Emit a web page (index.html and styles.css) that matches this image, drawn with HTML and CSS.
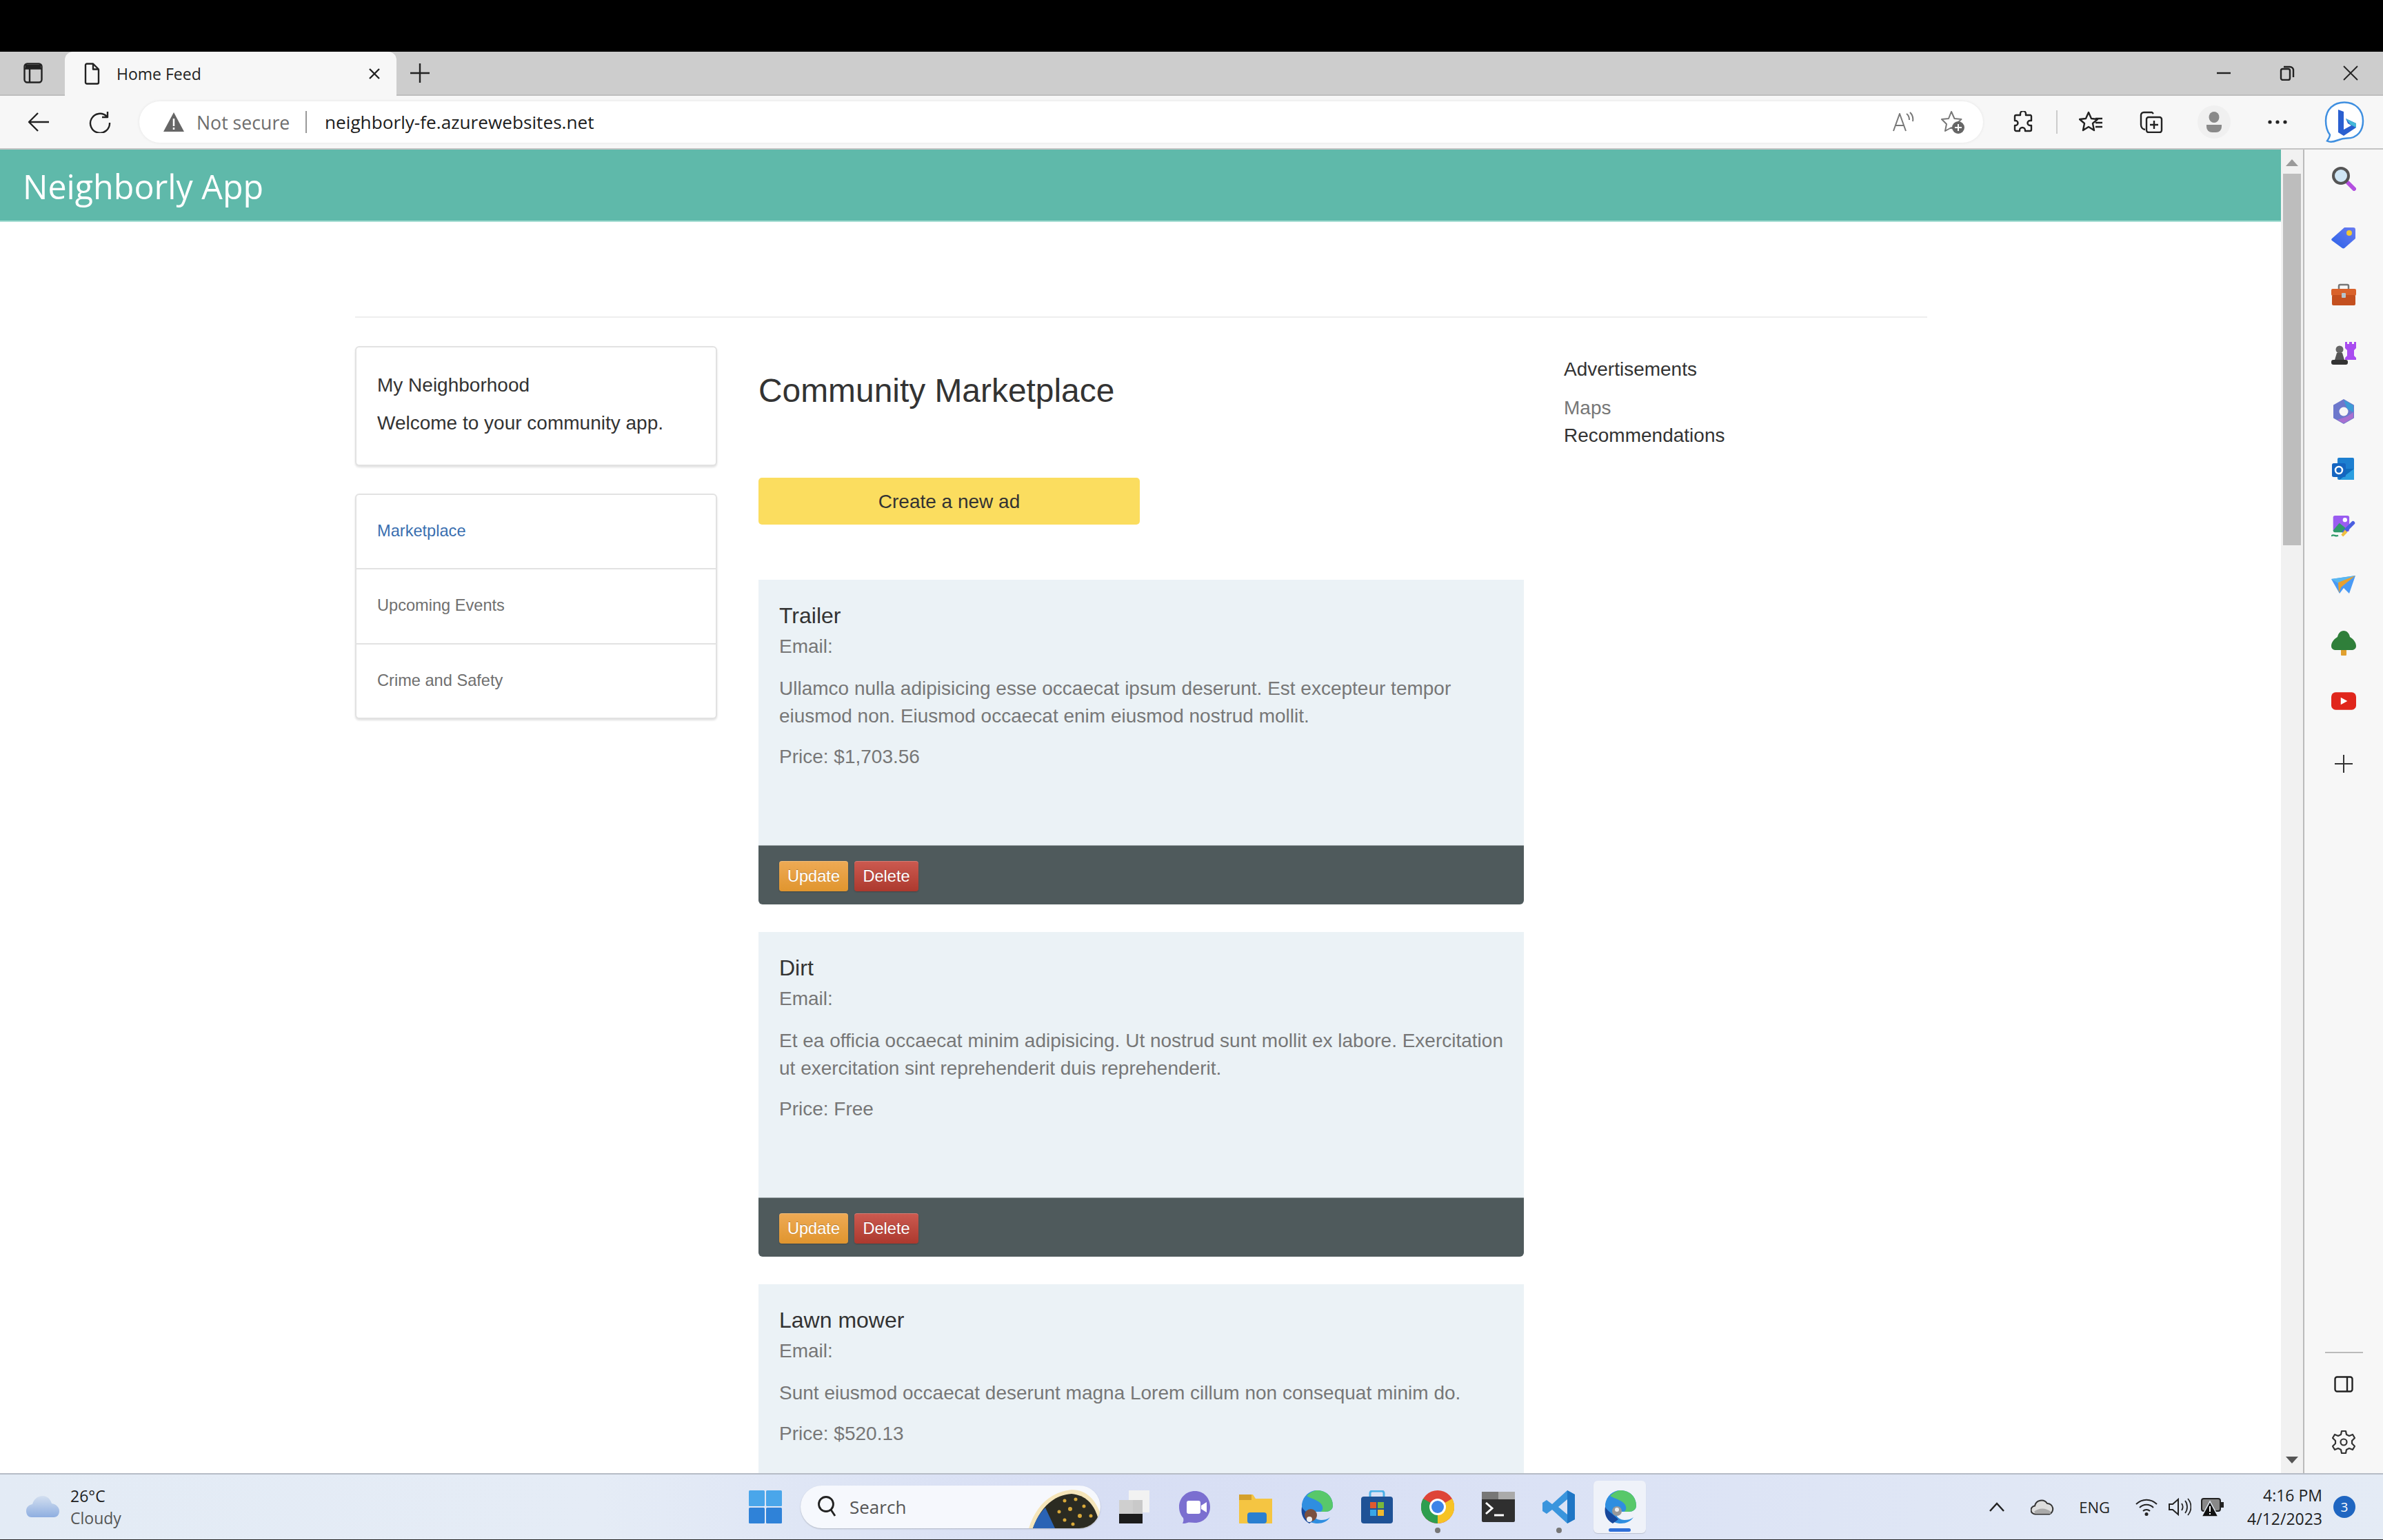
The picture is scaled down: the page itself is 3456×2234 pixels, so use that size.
FILE: index.html
```html
<!DOCTYPE html>
<html lang="en">
<head>
<meta charset="utf-8">
<title>Home Feed</title>
<link rel="stylesheet" href="styles.css">
</head>
<body>
<div class="topblack"></div>
<div class="tabbar">
  <svg class="ic tabs-ic" viewBox="0 0 28 30"><rect x="1.5" y="1.5" width="25" height="27" rx="4" class="ln"/><path d="M1.5 8.5h25M9 8.5v20" class="ln"/><path d="M3 3h22v5H3z" fill="#222"/></svg>
  <div class="tab">
    <svg class="ic file-ic" viewBox="0 0 24 32"><path d="M3 3.5a2 2 0 0 1 2-2h9l8 8v19a2 2 0 0 1-2 2H5a2 2 0 0 1-2-2zM14 1.5v8h8" class="ln"/></svg>
    <span class="tab-title">Home Feed</span>
    <svg class="ic tab-x" viewBox="0 0 18 18"><path d="M2 2l14 14M16 2L2 16" class="ln"/></svg>
  </div>
  <svg class="ic plus-ic" viewBox="0 0 30 30"><path d="M15 1v28M1 15h28" class="ln"/></svg>
  <div class="winctl">
    <svg class="ic" width="22" height="22" viewBox="0 0 22 22"><path d="M1 11h20" class="ln"/></svg>
    <svg class="ic" width="22" height="22" viewBox="0 0 22 22"><rect x="2" y="5" width="13" height="16" rx="2.5" class="ln"/><path d="M6 2h9a5 5 0 0 1 5 5v10" class="ln"/></svg>
    <svg class="ic" width="22" height="22" viewBox="0 0 22 22"><path d="M1 1l20 20M21 1L1 21" class="thin"/></svg>
  </div>
</div>
<div class="toolbar">
  <svg class="ic back-ic" viewBox="0 0 32 30"><path d="M31 15H3M15 2L2 15l13 13" class="ln"/></svg>
  <svg class="ic reload-ic" viewBox="0 0 34 32"><path d="M27 8A14 14 0 1 0 31 17M28 1v8h-8" class="ln"/></svg>
  <div class="address">
    <svg class="ic warn-ic" viewBox="0 0 32 30"><path d="M16 1L31 29H1z" fill="#666"/><path d="M16 10v11M16 23v3" stroke="#fff" stroke-width="2.5"/></svg>
    <span class="notsecure">Not secure</span>
    <span class="addr-sep"></span>
    <span class="url">neighborly-fe.azurewebsites.net</span>
    <span class="spacer"></span>
    <svg class="ic read-ic" viewBox="0 0 32 30"><path d="M2 28L11 3l9 25M5.5 20h11" class="gr"/><path d="M21 3c3 2 4 6 4 9M26 1c3 3 5 8 4 13" class="gr"/></svg>
    <svg class="ic fav-ic" viewBox="0 0 36 34"><path d="M16 2l4.500 10 10 1-7.500 7 2 10-9-5-9 5 2-10-7-7 10-1z" class="gr"/><circle cx="26" cy="25" r="9" fill="#666"/><path d="M26 20v10M21 25h10" stroke="#fff" stroke-width="2"/></svg>
  </div>
  <svg class="ic puzzle-ic" viewBox="0 0 30 32"><path d="M11 4a4 4 0 0 1 8 0v2h7a2 2 0 0 1 1 2v6h-2a3.500 3.500 0 0 0 0 7h2v6a2 2 0 0 1-2 2h-7v-1a4 4 0 0 0-8 0v1H5a2 2 0 0 1-2-2v-6h1a3.500 3.500 0 0 0 0-7H3V8a2 2 0 0 1 2-2h6z" class="ln"/></svg>
  <span class="tool-sep"></span>
  <svg class="ic favlist-ic" viewBox="0 0 36 32"><path d="M14 2l4 9 9 1-7 6 2 10-8-5-8 5 2-10-7-6 9-1z" class="ln"/><path d="M24 11h10M24 17h10M24 23h10" class="ln"/></svg>
  <svg class="ic coll-ic" viewBox="0 0 34 32"><path d="M20 4l-2-2H6a4 4 0 0 0-4 4v14a7 7 0 0 0 6 7" class="ln"/><rect x="10" y="9" width="22" height="22" rx="3" class="ln"/><path d="M21 14v12M15 20h12" class="ln"/></svg>
  <div class="profile"><svg class="ic" width="24" height="30" viewBox="0 0 24 30"><ellipse cx="12" cy="8" rx="7.500" ry="8" fill="#8a8a8a"/><path d="M1 19h22v3a8 8 0 0 1-8 8H9a8 8 0 0 1-8-8z" fill="#8a8a8a"/></svg></div>
  <svg class="ic dots-ic" viewBox="0 0 28 6"><circle cx="3" cy="3" r="2.600" fill="#222"/><circle cx="14" cy="3" r="2.600" fill="#222"/><circle cx="25" cy="3" r="2.600" fill="#222"/></svg>
  <svg class="ic bing-ic" viewBox="0 0 60 60"><path d="M30 1.500c15 0 27 10 27 27 0 14-8 25-23 25-5 0-9 1-14 3-5 2-11 3-15 1 2-3 4-6 4-9C4 42 3 36 3 28 3 11 15 1.500 30 1.500z" fill="#fff" stroke="#3f8fe0" stroke-width="2.500"/><path d="M21 12l8 3v26l11-6-5-3-3-7 15 7v6L29 50l-8-5z" fill="#2a5fd0"/><path d="M32 25l15 7v6l-8-4z" fill="#45b8d8"/></svg>
</div>
<div class="viewport">
  <main class="page">
    <header class="appbar">Neighborly App</header>
    <div class="container">
      <hr class="rule">
      <div class="columns">
        <aside class="left">
          <div class="panel intro">
            <p class="intro-line">My Neighborhood</p>
            <p class="intro-line">Welcome to your community app.</p>
          </div>
          <nav class="panel menu">
            <a class="menu-item active">Marketplace</a>
            <a class="menu-item">Upcoming Events</a>
            <a class="menu-item">Crime and Safety</a>
          </nav>
        </aside>
        <section class="center">
          <h1 class="title">Community Marketplace</h1>
          <button class="create">Create a new ad</button>
          <article class="card">
            <div class="card-body">
              <h2 class="card-title">Trailer</h2>
              <div class="line">Email:</div>
              <p class="desc">Ullamco nulla adipisicing esse occaecat ipsum deserunt. Est excepteur tempor eiusmod non. Eiusmod occaecat enim eiusmod nostrud mollit.</p>
              <p class="line">Price: $1,703.56</p>
            </div>
            <div class="card-foot"><button class="btn update">Update</button><button class="btn delete">Delete</button></div>
          </article>
          <article class="card">
            <div class="card-body">
              <h2 class="card-title">Dirt</h2>
              <div class="line">Email:</div>
              <p class="desc">Et ea officia occaecat minim adipisicing. Ut nostrud sunt mollit ex labore. Exercitation ut exercitation sint reprehenderit duis reprehenderit.</p>
              <p class="line">Price: Free</p>
            </div>
            <div class="card-foot"><button class="btn update">Update</button><button class="btn delete">Delete</button></div>
          </article>
          <article class="card">
            <div class="card-body">
              <h2 class="card-title">Lawn mower</h2>
              <div class="line">Email:</div>
              <p class="desc">Sunt eiusmod occaecat deserunt magna Lorem cillum non consequat minim do.</p>
              <p class="line">Price: $520.13</p>
            </div>
          </article>
        </section>
        <aside class="ads">
          <div class="ads-head">Advertisements</div>
          <div class="ads-muted">Maps</div>
          <div class="ads-link">Recommendations</div>
        </aside>
      </div>
    </div>
  </main>
  <div class="scrollbar">
    <svg class="arrow" viewBox="0 0 18 10"><path d="M9 0l9 10H0z" fill="#9a9a9a"/></svg>
    <div class="thumb"></div>
    <span class="spacer"></span>
    <svg class="arrow" viewBox="0 0 18 10"><path d="M0 0h18L9 10z" fill="#555"/></svg>
  </div>
  <aside class="edge">
    <div class="edge-cell first-cell"><svg class="ei" viewBox="0 0 36 36"><path d="M22 22l11 11" stroke="#b44fe0" stroke-width="6" stroke-linecap="round"/><circle cx="14" cy="14" r="11" fill="#cfe6f5" stroke="#555" stroke-width="4"/></svg></div>
    <div class="edge-cell"><svg class="ei" viewBox="0 0 36 36"><defs><linearGradient id="tg" x1="0" y1="1" x2="1" y2="0"><stop offset="0" stop-color="#2a62e8"/><stop offset="1" stop-color="#6a7cf0"/></linearGradient></defs><path d="M1 19L19 3h13a3 3 0 0 1 3 3v13L19 33a3 3 0 0 1-3 0L1 22a2 2 0 0 1 0-3z" fill="url(#tg)"/><circle cx="26" cy="11" r="4" fill="#f2c832"/></svg></div>
    <div class="edge-cell"><svg class="ei" viewBox="0 0 36 36"><path d="M11 8V4a2 2 0 0 1 2-2h10a2 2 0 0 1 2 2v4" fill="none" stroke="#777" stroke-width="2.500"/><rect x="0" y="8" width="36" height="10" rx="2" fill="#d9622b"/><rect x="1" y="17" width="34" height="15" rx="2" fill="#c4501f"/><rect x="15" y="14" width="6" height="7" rx="1" fill="#b5c4cc"/></svg></div>
    <div class="edge-cell"><svg class="ei" viewBox="0 0 36 36"><path d="M20 1h3v3h3V1h4v3h3V1h3v9l-3 3v8l3 3v3H20v-3l3-3v-8l-3-3z" fill="#a94cf0"/><circle cx="12" cy="12" r="5.500" fill="#666"/><path d="M8 17h8l3 10H5z" fill="#555"/><rect x="0" y="27" width="24" height="7" rx="3" fill="#333"/></svg></div>
    <div class="edge-cell"><svg class="ei" viewBox="0 0 36 36"><path d="M18 1l14 8v18l-14 8-14-8V9z" fill="#6d78cc" stroke="#6d78cc" stroke-width="2" stroke-linejoin="round"/><path d="M18 1l14 8v10l-9-5z" fill="#3d9bd6"/><path d="M32 19v8l-14 8-9-5 14-5z" fill="#a870d0"/><circle cx="18" cy="18" r="6.500" fill="#f7f7f7"/></svg></div>
    <div class="edge-cell"><svg class="ei" viewBox="0 0 36 36"><rect x="9" y="1" width="24" height="32" rx="2" fill="#1d7fd0"/><path d="M12 17l21 0v16H12z" fill="#0f6cbd"/><path d="M33 17v16H12z" fill="#2b9ee0"/><rect x="1" y="9" width="20" height="20" rx="2.500" fill="#1565c0"/><circle cx="11" cy="19" r="5" fill="none" stroke="#fff" stroke-width="2.500"/></svg></div>
    <div class="edge-cell"><svg class="ei" viewBox="0 0 40 38"><rect x="3" y="0" width="26" height="26" rx="3" fill="#9a5cf0"/><path d="M3 24l10-12 10 8-4 7H6a3 3 0 0 1-3-3z" fill="#2f9a6a"/><circle cx="22" cy="7" r="3.500" fill="#fff"/><path d="M21 26l14-14" stroke="#4a5ee0" stroke-width="6" stroke-linecap="round"/><path d="M16 31l6-8 4 4-7 7z" fill="#f0c040"/><path d="M0 33c4-4 7 2 11-1" fill="none" stroke="#2f9a6a" stroke-width="2.500"/></svg></div>
    <div class="edge-cell"><svg class="ei" viewBox="0 0 36 28"><path d="M0 5L35 0l-9 26-8-8-6 8z" fill="#4a9af5"/><path d="M0 5l10 6 25-11z" fill="#5ab8f0"/><path d="M10 10l25-10-21 17-3 8z" fill="#e8a030"/></svg></div>
    <div class="edge-cell"><svg class="ei" viewBox="0 0 36 36"><rect x="14" y="26" width="8" height="10" rx="1" fill="#e0a030"/><path d="M18 0c5 0 8 4 9 9 5 3 9 8 9 13 0 4-3 6-7 6H7c-4 0-7-2-7-6 0-5 4-10 9-13 1-5 4-9 9-9z" fill="#2f7f3a"/></svg></div>
    <div class="edge-cell"><svg class="ei yt" viewBox="0 0 34 24"><rect width="34" height="24" rx="6" fill="#e0261c"/><path d="M13 7l9 5-9 5z" fill="#fff"/></svg></div>
    <div class="edge-cell plus-cell"><svg class="edge-plus" viewBox="0 0 26 26"><path d="M13 0v26M0 13h26" stroke="#333" stroke-width="2" fill="none"/></svg></div>
    <span class="spacer"></span>
    <div class="edge-line"></div>
    <svg class="ic panel-ic" viewBox="0 0 28 24"><rect x="1.500" y="1.500" width="25" height="21" rx="3" class="ln"/><path d="M19 1.500v21" class="ln"/></svg>
    <svg class="ic gear-ic" viewBox="0 0 34 36"><path d="M14 2h6l1 5 4 2 5-2 3 5-4 4v4l4 4-3 5-5-2-4 2-1 5h-6l-1-5-4-2-5 2-3-5 4-4v-4L1 12l3-5 5 2 4-2z" fill="none" stroke="#333" stroke-width="2.200" stroke-linejoin="round"/><circle cx="17" cy="18" r="4.500" fill="none" stroke="#333" stroke-width="2.200"/></svg>
  </aside>
</div>
<footer class="taskbar">
  <div class="weather">
    <svg class="cloud-ic" viewBox="0 0 48 32"><defs><linearGradient id="cg" x1="0" y1="0" x2="0" y2="1"><stop offset="0" stop-color="#d3dff0"/><stop offset="1" stop-color="#8eaee0"/></linearGradient></defs><path d="M8 31C2 31 0 26 0 22c0-6 4-9 9-10C11 5 16 0 24 0c7 0 11 5 13 11 6 1 11 5 11 11 0 5-3 9-8 9z" fill="url(#cg)"/></svg>
    <div class="weather-text"><div class="temp">26°C</div><div class="cond">Cloudy</div></div>
  </div>
  <div class="taskapps">
    <svg class="ti win" viewBox="0 0 48 48"><rect x="0" y="0" width="23" height="23" rx="1.500" fill="#4aa6ea"/><rect x="25" y="0" width="23" height="23" rx="1.500" fill="#4aa6ea"/><rect x="0" y="25" width="23" height="23" rx="1.500" fill="#2f82d8"/><rect x="25" y="25" width="23" height="23" rx="1.500" fill="#2f82d8"/></svg>
    <div class="search">
      <svg class="search-ic" viewBox="0 0 30 34"><circle cx="13" cy="13" r="10.500" fill="none" stroke="#222" stroke-width="2.800"/><path d="M20 21l6 9" stroke="#222" stroke-width="2.800"/></svg>
      <span class="search-text">Search</span>
      <span class="spacer"></span>
      <svg class="search-art" viewBox="0 0 104 56"><path d="M0 56C10 24 30 4 62 0c22 0 36 16 42 36-2 10-6 16-12 20z" fill="#f5e5ba"/><path d="M6 56C16 28 34 8 62 6c20 2 32 14 38 34-2 8-4 12-8 16z" fill="#2b2b22"/><path d="M6 56c4-12 10-22 18-30l14 30z" fill="#2a63b5"/><g fill="#d8a838"><circle cx="52" cy="16" r="2.500"/><circle cx="68" cy="14" r="2.500"/><circle cx="80" cy="24" r="2.500"/><circle cx="60" cy="28" r="3"/><circle cx="44" cy="32" r="2.500"/><circle cx="74" cy="38" r="3"/><circle cx="52" cy="44" r="2.500"/><circle cx="90" cy="38" r="2.500"/><circle cx="64" cy="50" r="2.500"/></g></svg>
    </div>
    <svg class="ti" viewBox="0 0 48 48"><rect x="16" y="0" width="30" height="32" fill="#f2f2f2"/><rect x="2" y="14" width="34" height="30" fill="#c9c9c9"/><rect x="2" y="14" width="20" height="34" fill="#1c1c1c"/><rect x="2" y="14" width="20" height="20" fill="#cfcfcf"/><rect x="2" y="34" width="34" height="14" fill="#1c1c1c"/></svg>
    <svg class="ti" viewBox="0 0 48 48"><path d="M24 1c13 0 22 10 22 23S37 47 24 47c-4 0-8-1-11 0-2 1-6 1-7 1 1-2 2-5 1-8C3 36 1 30 1 24 1 11 11 1 24 1z" fill="#7b6fd0"/><rect x="12" y="15" width="20" height="19" rx="3" fill="#fff"/><path d="M33 22l8-5v15l-8-5z" fill="#fff"/></svg>
    <svg class="ti" viewBox="0 0 48 48"><path d="M0 6h20l4 6h24v36H0z" fill="#f5c542"/><path d="M0 6h18v8H0z" fill="#d4a02c"/><rect x="12" y="32" width="28" height="16" rx="4" fill="#2a7fd0"/></svg>
    <svg class="ti" viewBox="0 0 48 48"><use href="#edge-shape"/><circle cx="16" cy="36" r="9" fill="#7a5040"/><circle cx="14" cy="42" r="4" fill="#eee"/></svg>
    <svg class="ti" viewBox="0 0 48 48"><path d="M14 10V4a3 3 0 0 1 3-3h14a3 3 0 0 1 3 3v6" fill="none" stroke="#4ab0e8" stroke-width="3"/><rect x="1" y="9" width="46" height="39" rx="4" fill="#1f5296"/><rect x="14" y="17" width="9" height="9" fill="#e05a30"/><rect x="25" y="17" width="9" height="9" fill="#7ab83a"/><rect x="14" y="28" width="9" height="9" fill="#38a6e6"/><rect x="25" y="28" width="9" height="9" fill="#f0b92e"/></svg>
    <div class="dotwrap">
      <svg class="ti" viewBox="0 0 48 48"><circle cx="24" cy="24" r="24" fill="#de4437"/><path d="M24 24L45 12A24 24 0 0 1 24 48z" fill="#f7c325"/><path d="M24 24L24 48A24 24 0 0 1 3 12z" fill="#2e9e4f"/><circle cx="24" cy="24" r="12" fill="#fff"/><circle cx="24" cy="24" r="9" fill="#3e84e8"/></svg>
      <span class="rundot"></span>
    </div>
    <svg class="ti" viewBox="0 0 48 48"><rect y="2" width="48" height="44" rx="2" fill="#2f2f2f"/><rect y="2" width="48" height="11" fill="#777"/><rect x="24" y="2" width="24" height="11" fill="#aaa"/><path d="M6 18l9 8-9 8" fill="none" stroke="#fff" stroke-width="3"/><path d="M18 36h14" stroke="#fff" stroke-width="3"/></svg>
    <div class="dotwrap">
      <svg class="ti" viewBox="0 0 48 48"><path d="M36 0l11 6v36l-11 6L14 28l-8 6-6-4V18l6-4 8 6zM36 13L23 24l13 11z" fill="#3a95dd"/><path d="M36 0l11 6v36l-11 6z" fill="#1f76c5"/></svg>
      <span class="rundot"></span>
    </div>
    <div class="activeapp">
      <svg class="ti" viewBox="0 0 48 48"><defs><g id="edge-shape"><path d="M3 20C5 8 14 0 25 0c14 0 23 10 23 22 0 6-5 9-11 9H18c0 8 7 12 13 12 5 0 9-1 13-4-4 6-11 9-18 9C12 48 3 38 3 28z" fill="#2f8ee0"/><path d="M10 8C16 2 22 0 25 0c14 0 23 10 23 22 0 6-5 9-11 9H30c4-2 4-6 2-10C29 15 17 12 10 8z" fill="#58c86a"/><path d="M14 48C6 44 1 36 3 24 6 30 14 34 22 42z" fill="#17489c"/></g></defs><use href="#edge-shape"/><circle cx="20" cy="30" r="7" fill="#999"/><circle cx="20" cy="28" r="3" fill="#eee"/></svg>
      <span class="activebar"></span>
    </div>
  </div>
  <div class="tray">
    <svg class="tr chevron" viewBox="0 0 22 14"><path d="M1 13l10-11 10 11" fill="none" stroke="#222" stroke-width="2.500"/></svg>
    <svg class="tr onedrive" viewBox="0 0 34 24"><path d="M7 22.500a6 6 0 0 1-1-12A10 10 0 0 1 24 7a8 8 0 0 1 3 15.500z" fill="#ddd" stroke="#333" stroke-width="2"/><path d="M5 19c6-6 18-6 24 0v3H7z" fill="#aaa"/></svg>
    <span class="eng">ENG</span>
    <svg class="tr wifi" viewBox="0 0 32 26"><path d="M1 9a21 21 0 0 1 30 0M6 14a14 14 0 0 1 20 0M11 19a7 7 0 0 1 10 0" fill="none" stroke="#222" stroke-width="2"/><circle cx="16" cy="23.500" r="2.500" fill="#222"/></svg>
    <svg class="tr vol" viewBox="0 0 34 28"><path d="M2 10h5l8-7v22l-8-7H2z" fill="none" stroke="#222" stroke-width="2"/><path d="M20 9c2 3 2 7 0 10M25 5c4 5 4 13 0 18M29 2c6 7 6 17 0 24" fill="none" stroke="#222" stroke-width="1.800"/></svg>
    <svg class="tr batt" viewBox="0 0 34 28"><rect x="1" y="2" width="27" height="18" rx="3" fill="#888" stroke="#222" stroke-width="2"/><rect x="28" y="7" width="5" height="8" fill="#222"/><path d="M13 6L25 28H1z" fill="#111" stroke="#e5ecf5" stroke-width="1.500"/><path d="M13 13v8M13 23v2" stroke="#fff" stroke-width="2"/></svg>
    <div class="clock"><div>4:16 PM</div><div>4/12/2023</div></div>
    <span class="badge">3</span>
  </div>
</footer>
</body>
</html>
```
FILE: styles.css
```css
* { box-sizing: border-box; }
html, body { margin: 0; padding: 0; width: 3456px; height: 2234px; overflow: hidden; background: #fff; }
body { display: flex; flex-direction: column; font-family: "Liberation Sans", Arial, sans-serif; color: #333; }
p, h1, h2 { margin: 0; font-weight: 400; }
.spacer { flex: 1; }
.ic { flex: none; display: block; }
.ln { fill: none; stroke: #222; stroke-width: 2.4; stroke-linejoin: round; }
.thin { fill: none; stroke: #222; stroke-width: 1.8; }
.gr { fill: none; stroke: #777; stroke-width: 2; stroke-linejoin: round; }

.topblack { height: 75px; background: #000; flex: none; }
.tabbar { height: 64px; background: #cdcdcd; flex: none; display: flex; align-items: center; border-bottom: 2px solid #bdbdbd; padding-left: 34px; }
.tabs-ic { width: 28px; height: 30px; }
.tab { width: 481px; height: 64px; margin: 0 0 0 32px; background: #f7f7f7; border-radius: 12px 12px 0 0; display: flex; align-items: center; padding: 0 23px 0 27px; align-self: flex-start; }
.file-ic { width: 24px; height: 32px; }
.tab-title { font: 400 23px "Open Sans", sans-serif; color: #222; margin-left: 24px; flex: 1; }
.tab-x { width: 18px; height: 18px; }
.plus-ic { width: 30px; height: 30px; margin-left: 19px; }
.winctl { margin-left: auto; display: flex; gap: 70px; padding-right: 36px; }

.toolbar { height: 78px; background: #f7f7f7; flex: none; display: flex; align-items: center; border-bottom: 2px solid #c4c4c4; padding-left: 40px; }
.back-ic { width: 32px; height: 30px; }
.reload-ic { width: 34px; height: 32px; margin-left: 56px; }
.address { width: 2674px; height: 60px; margin-left: 40px; border-radius: 30px; background: #fff; display: flex; align-items: center; padding: 0 26px 0 34px; box-shadow: 0 0 4px rgba(0,0,0,.08); }
.warn-ic { width: 32px; height: 30px; }
.notsecure { font: 400 26.700px "Open Sans", sans-serif; color: #6e6e6e; margin-left: 17px; width: 133px; white-space: nowrap; }
.addr-sep { width: 2px; height: 32px; background: #999; margin: 0 26px 0 25px; }
.url { font: 400 26.200px "Open Sans", sans-serif; color: #1c1c1c; }
.read-ic { width: 32px; height: 30px; }
.fav-ic { width: 36px; height: 34px; margin-left: 38px; }
.puzzle-ic { width: 30px; height: 32px; margin-left: 43px; }
.tool-sep { width: 2px; height: 34px; background: #ccc; margin-left: 33px; }
.favlist-ic { width: 36px; height: 32px; margin-left: 31px; }
.coll-ic { width: 34px; height: 32px; margin-left: 52px; }
.profile { width: 48px; height: 48px; margin-left: 50px; border-radius: 50%; background: #f0f0f0; display: flex; align-items: center; justify-content: center; }
.dots-ic { width: 28px; height: 6px; margin-left: 54px; }
.bing-ic { width: 60px; height: 60px; margin-left: 53px; }

.viewport { flex: 1; display: flex; min-height: 0; }
.page { width: 3308px; flex: none; overflow: hidden; background: #fff; }
.appbar { height: 105px; background: #5fb9aa; color: #fff; font: 400 48.400px/106px "Open Sans", sans-serif; padding-left: 33px; border-bottom: 2px solid #a9ded4; }
.container { width: 2280px; margin-left: 515px; padding-top: 137px; }
.rule { height: 2px; border: 0; background: #eeeeee; margin: 0 0 41px; }
.columns { display: grid; grid-template-columns: 525px 1110px 1fr; column-gap: 60px; }
.panel { background: #fff; border: 2px solid #e2e2e2; border-radius: 6px; box-shadow: 0 2px 3px rgba(0,0,0,.12); }
.intro { height: 174px; padding: 35px 30px 0; margin-bottom: 40px; }
.intro-line { font-size: 28px; line-height: 40px; color: #333; margin-bottom: 15px; }
.menu { display: flex; flex-direction: column; height: 327px; }
.menu-item { flex: 1; font-size: 23.600px; color: #6f6f6f; display: flex; align-items: center; padding-left: 30px; border-bottom: 2px solid #e2e2e2; padding-bottom: 1px; }
.menu-item:last-child { border-bottom: 0; }
.menu-item.active { color: #3a6fb0; }
.title { font-size: 47.900px; line-height: 56px; color: #333; padding-top: 37px; height: 191px; }
.create { display: block; width: 553px; height: 68px; background: #fbdd5f; border: 0; border-radius: 5px; font: 400 28px "Liberation Sans", sans-serif; color: #333; margin-bottom: 80px; padding-top: 2px; }
.card { height: 471px; margin-bottom: 40px; background: #ebf2f6; border-radius: 0 0 6px 6px; overflow: hidden; display: flex; flex-direction: column; }
.card-body { height: 385px; padding: 30px 30px 0; font-size: 28px; color: #777; }
.card-title { font-size: 32px; line-height: 44px; color: #333; margin-bottom: 3px; }
.line { line-height: 40px; }
.desc { line-height: 40px; margin: 21px 0 19px; }
.card-foot { height: 86px; background: #4f5a5c; display: flex; align-items: flex-start; padding: 22px 30px 0; gap: 9px; border-top: 1px solid #9aa3a5; }
.btn { height: 44px; border: 0; border-radius: 4px; font: 400 23.600px "Liberation Sans", sans-serif; color: #fff; padding: 0 11px; text-shadow: 0 -1px 0 rgba(0,0,0,.25); box-shadow: inset 0 1px 0 rgba(255,255,255,.2), 0 1px 2px rgba(0,0,0,.2); }
.update { width: 100px; background: linear-gradient(#eeaa55, #e0952e); }
.delete { width: 93px; background: linear-gradient(#cc5a50, #ac392e); }
.ads { margin-left: -2px; padding-top: 14px; font-size: 28px; line-height: 40px; }
.ads-head { color: #333; margin-bottom: 16px; }
.ads-muted { color: #777; }
.ads-link { color: #333; }

.scrollbar { width: 34px; flex: none; background: #f1f1f1; border-right: 2px solid #bbb; display: flex; flex-direction: column; align-items: center; padding: 14px 0 14px 0; }
.arrow { width: 18px; height: 10px; flex: none; }
.thumb { width: 26px; height: 539px; margin-top: 11px; background: #bdbdbd; }
.edge { flex: 1; background: #f7f7f7; display: flex; flex-direction: column; align-items: center; padding-bottom: 27px; }
.edge-cell { height: 84px; width: 100%; display: flex; align-items: center; justify-content: center; flex: none; }
.first-cell { height: 86px; padding-bottom: 2px; }
.ei { width: 36px; height: 36px; display: block; filter: blur(.5px); }
.ei.yt { height: 26px; }
.plus-cell { height: 98px; }
.edge-plus { width: 26px; height: 26px; display: block; }
.edge-line { width: 55px; height: 2px; background: #bbb; margin-bottom: 33px; flex: none; }
.panel-ic { width: 28px; height: 24px; margin-bottom: 54px; }
.gear-ic { width: 34px; height: 36px; }

.taskbar { height: 97px; flex: none; display: grid; grid-template-columns: 1086px auto 1fr; align-items: center; background: linear-gradient(90deg, #e3ebf5 0%, #e5ecf6 25%, #d7def4 45%, #dbe2f5 65%, #e4ebf5 100%); border-top: 2px solid #b6bcc6; border-bottom: 1px solid #222; }
.weather { display: flex; align-items: center; padding-left: 38px; gap: 16px; }
.cloud-ic { width: 48px; height: 32px; }
.weather-text { font: 400 23px/32px "Open Sans", sans-serif; color: #1f1f1f; }
.cond { color: #555; }
.taskapps { display: flex; align-items: center; position: relative; }
.ti { width: 48px; height: 48px; display: block; flex: none; filter: blur(.4px); }
.taskapps > .ti, .dotwrap, .activeapp { margin-left: 40px; }
.taskapps > .win { margin-left: 0; }
.search { width: 435px; height: 62px; margin-left: 27px; border-radius: 31px; background: #f6f8fd; display: flex; align-items: center; padding-left: 24px; overflow: hidden; box-shadow: 0 1px 2px rgba(0,0,0,.2); margin-right: -15px; }
.search-ic { width: 30px; height: 34px; }
.search-text { font: 400 26px "Open Sans", sans-serif; color: #555; margin-left: 17px; }
.search-art { width: 104px; height: 56px; align-self: flex-end; }
.dotwrap { position: relative; }
.rundot { position: absolute; left: 20px; bottom: -14px; width: 8px; height: 8px; border-radius: 50%; background: #777; }
.taskapps > .activeapp { position: relative; width: 76px; height: 76px; margin-left: 26px; border-radius: 6px; background: #eff2f9; display: flex; align-items: center; justify-content: center; box-shadow: 0 1px 1px rgba(0,0,0,.15); }
.activebar { position: absolute; left: 22px; bottom: 2px; width: 32px; height: 5px; border-radius: 3px; background: #2f6fd8; }
.tray { display: flex; align-items: center; justify-content: flex-end; padding-right: 40px; }
.tr { display: block; flex: none; }
.chevron { width: 22px; height: 14px; }
.onedrive { width: 34px; height: 24px; margin-left: 38px; }
.eng { font: 400 22px "Open Sans", sans-serif; color: #222; margin-left: 36px; }
.wifi { width: 32px; height: 26px; margin-left: 37px; }
.vol { width: 34px; height: 28px; margin-left: 15px; }
.batt { width: 34px; height: 28px; margin-left: 14px; }
.clock { font: 400 23px/34px "Open Sans", sans-serif; color: #222; text-align: right; margin-left: 33px; }
.badge { width: 32px; height: 32px; border-radius: 50%; background: #1f66c1; color: #fff; font: 400 19px/32px "Open Sans", sans-serif; text-align: center; margin-left: 16px; }
```
